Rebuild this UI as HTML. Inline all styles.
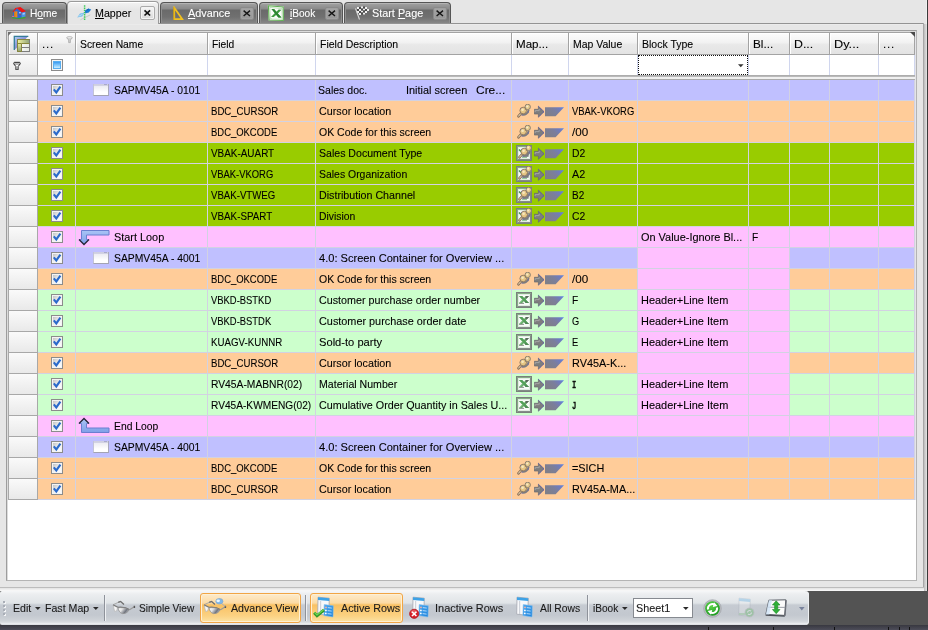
<!DOCTYPE html>
<html><head><meta charset="utf-8"><title>Mapper</title>
<style>
*{box-sizing:border-box;margin:0;padding:0}
html,body{width:928px;height:630px;overflow:hidden}
body{background:#e6e6e6;font-family:"Liberation Sans",sans-serif;font-size:11.5px;color:#000;position:relative}
.abs{position:absolute}
.t{display:inline-block;transform-origin:0 50%;white-space:nowrap;-webkit-text-stroke:0.1px currentColor}
.c{position:absolute;overflow:hidden;white-space:nowrap;line-height:20px;padding-left:2.5px;font-size:11.5px}
.hd{background:linear-gradient(#fcfcfc,#f2f2f2 45%,#e9e9e9 55%,#e3e3e3)!important;line-height:23px;padding-left:4px;box-shadow:inset 1px 1px 0 #fff}
.ind{background:linear-gradient(#fafafa,#e9e9e9)!important}
.cb{position:absolute;width:12px;height:12px;border:1px solid #8c8c8c;background:linear-gradient(135deg,#b9b9b9,#f2f2f2 55%,#fff);box-shadow:inset 0 0 0 1px #f4f4f4}
.tab{position:absolute;top:2px;height:21px;border:1px solid #565656;border-bottom:none;border-radius:4px 4px 0 0;background:linear-gradient(#a2a2a2 0,#8a8a8a 6px,#6a6a6a 7px,#707070 14px,#8a8a8a 21px);box-shadow:inset 0 1px 0 #b4b4b4,inset 1px 0 0 #8e8e8e,inset -1px 0 0 #8e8e8e;color:#fff;line-height:20px;white-space:nowrap}
.tab.act{background:linear-gradient(#f2f2f2,#e6e6e6 8px);color:#000;border-color:#9b9b9b;top:1px;height:23px;box-shadow:inset 0 1px 0 #fff}
.x{position:absolute;width:14px;height:13px;border:1px solid #8a8a8a;border-radius:2px;background:linear-gradient(#a6a6a6,#969696);box-shadow:inset 0 0 0 1px #a0a0a0}
.tab.act .x{width:15px;height:14px;border-color:#ababab;background:linear-gradient(#f6f6f6,#dadada);box-shadow:inset 0 0 0 1px #f4f4f4}
.tb{position:absolute;line-height:16px;white-space:nowrap;color:#1a1a1a}
#root{position:absolute;left:0;top:0;width:928px;height:630px;will-change:transform;overflow:hidden}
</style></head><body><div id="root">

<svg width="0" height="0" style="position:absolute"><defs><linearGradient id="pg" x1="0" y1="0.500" x2="1" y2="0"><stop offset="0" stop-color="#7f7f8a"/><stop offset="0.450" stop-color="#7b7e9c"/><stop offset="0.750" stop-color="#6f7cc0"/><stop offset="1" stop-color="#5c86e8"/></linearGradient></defs></svg>
<div class="abs" style="left:0;top:23px;width:924px;height:1px;background:#939393"></div>
<div class="abs" style="left:0;top:24px;width:923px;height:1px;background:#ebebeb"></div>
<div class="abs" style="left:926px;top:0;width:1px;height:591px;background:#f0f0f0"></div>
<div class="abs" style="left:923px;top:23px;width:1px;height:566px;background:#a8a8a8"></div>
<div class="abs" style="left:924px;top:24px;width:3px;height:567px;background:linear-gradient(90deg,#bcbcbc,#e6e6e6)"></div>
<div class="abs" style="left:927px;top:0;width:1px;height:630px;background:#3a3a3a"></div>
<div class="tab" style="left:2px;width:65px"><svg class="abs" style="left:8px;top:3px" width="16" height="14" viewBox="11 6 16 14"><ellipse cx="18.800" cy="17.400" rx="6.900" ry="1.700" fill="#37a82c"/><path d="M13 12.200L17 8.300L21.600 12.300V17.600L17.500 18.300L13.200 17z" fill="#2b68d4"/><path d="M21.600 12.300L25.500 11.500V16.600L21.600 17.600z" fill="#4b8fe6"/><path d="M22.600 13.200l2.200-.4v1.500l-2.200.4z" fill="#a9d2f6"/><path d="M14 11.600L17.400 11.300V17.600L14.200 16.900z" fill="#e98a1e"/><path d="M14.800 12.200v4.600" stroke="#c86a10" stroke-width=".6"/><path d="M19.300 12h1.300v1.500h-1.300z" fill="#d8ecff"/><path d="M19.300 13.700h1.500v1h-1.500z" fill="#d03030"/><path d="M15.300 8L20.400 7L26.100 11.300L22 12.500L17 8.300L13.200 12.300L12.600 11.800z" fill="#f01414"/><ellipse cx="13" cy="16.400" rx="1" ry=".7" fill="#d858c8"/></svg><span class="abs" style="left:27px;top:0px"><span class="t" style="transform:scaleX(0.887)">H<u>o</u>me</span></span></div>
<div class="tab act" style="left:67px;width:92px"><svg class="abs" style="left:8px;top:2px" width="17" height="18" viewBox="76 4 17 18"><path d="M80.400 19.800L90.200 14.900" stroke="#c9c9c9" stroke-width="1"/><path d="M77.200 17.400L80 13.600L84.600 12.500L82.200 16.600z" fill="#7cc0ec"/><path d="M78.600 16.300L82.600 14.200" stroke="#b9e0f8" stroke-width="1"/><path d="M84.800 10.600L88.400 8.400L91.200 9.400L88.800 12.400L84.800 13.400z" fill="#1c7ad2"/><path d="M86.500 10.200l2.300-1" stroke="#0f5fb0" stroke-width="1"/><path d="M84.600 5.300V20.600" stroke="#3ecb5a" stroke-width="1.500" stroke-dasharray="1.400 .800"/></svg><span class="abs" style="left:27px;top:1px"><span class="t" style="transform:scaleX(0.928)"><u>M</u>apper</span></span><div class="x" style="left:72px;top:4px"><svg width="13" height="12" viewBox="0 0 13 12" class="abs" style="left:0;top:0"><path d="M3.500 3.300l5.600 5.200M9.100 3.300l-5.600 5.200" stroke="#111" stroke-width="1.700"/></svg></div></div>
<div class="tab" style="left:160px;width:98px"><svg class="abs" style="left:12px;top:3px" width="12" height="15" viewBox="0 0 12 15"><path d="M1.300 1.800L9.300 13.200H1.300z" fill="none" stroke="#f2c11e" stroke-width="1.700" stroke-linejoin="miter"/><path d="M.8 1.200v12.600" stroke="#c89a10" stroke-width=".7"/></svg><span class="abs" style="left:27px;top:0px"><span class="t" style="transform:scaleX(0.943)"><u>A</u>dvance</span></span><div class="x" style="left:79px;top:4px"><svg width="12" height="11" viewBox="0 0 12 11" class="abs" style="left:0;top:0"><path d="M2.600 2.600l6.400 5.400M9 2.600l-6.400 5.400" stroke="#161616" stroke-width="1.400"/></svg></div></div>
<div class="tab" style="left:259px;width:84px"><svg class="abs" style="left:7px;top:1px" width="18" height="18" viewBox="267 4 18 18"><path d="M267.800 5L283.800 6.400L284 21L268.600 20.600z" fill="#f4faf2"/><path d="M268.400 5.700L283.200 7L283.400 20.400L269.100 20z" fill="none" stroke="#5fae52" stroke-width="1.100"/><path d="M269.800 7.400L282 8.600L282.200 19L270.400 18.600z" fill="#fbfdfb" stroke="#9fd095" stroke-width=".6"/><path d="M271.500 9l2.800.2 2 2.600 2.400-2.300 2.800.3-3.700 3.700 3.900 4.100-3-.2-2.300-2.700-2.600 2.400-2.800-.2 3.900-3.800z" fill="#3d9a3d"/><path d="M271.500 9l2.800.2 6.900 8.400-3-.2z" fill="#2a8430"/><path d="M272 18.300l9.500.6" stroke="#e8f4e6" stroke-width="1.400"/></svg><span class="abs" style="left:30px;top:0px"><span class="t" style="transform:scaleX(0.876)"><u>i</u>Book</span></span><div class="x" style="left:65px;top:4px"><svg width="12" height="11" viewBox="0 0 12 11" class="abs" style="left:0;top:0"><path d="M2.600 2.600l6.400 5.400M9 2.600l-6.400 5.400" stroke="#161616" stroke-width="1.400"/></svg></div></div>
<div class="tab" style="left:344px;width:107px"><svg class="abs" style="left:8px;top:3px" width="18" height="15" viewBox="0 0 18 15"><g fill="#f0f0f0"><rect x="4" y="1" width="2" height="2"/><rect x="8" y="0.500" width="2" height="2"/><rect x="12" y="1" width="2" height="2"/><rect x="6" y="3" width="2" height="2"/><rect x="10" y="2.500" width="2" height="2"/><rect x="14" y="3" width="2" height="2"/><rect x="4" y="5" width="2" height="2"/><rect x="8" y="4.500" width="2" height="2"/><rect x="12" y="5" width="2" height="2"/><rect x="6" y="7" width="2" height="2"/><rect x="10" y="6.500" width="2" height="2"/></g><g fill="#4a4a4a"><rect x="6" y="1" width="2" height="2"/><rect x="10" y="0.500" width="2" height="2"/><rect x="4" y="3" width="2" height="2"/><rect x="8" y="2.500" width="2" height="2"/><rect x="12" y="3" width="2" height="2"/><rect x="6" y="5" width="2" height="2"/><rect x="10" y="4.500" width="2" height="2"/><rect x="8" y="6.500" width="2" height="2"/></g><path d="M2.500 2.500l4 11" stroke="#d8d8d8" stroke-width="1.100"/></svg><span class="abs" style="left:27px;top:0px"><span class="t" style="transform:scaleX(0.942)">Start <u>P</u>age</span></span><div class="x" style="left:88px;top:4px"><svg width="12" height="11" viewBox="0 0 12 11" class="abs" style="left:0;top:0"><path d="M2.600 2.600l6.400 5.400M9 2.600l-6.400 5.400" stroke="#161616" stroke-width="1.400"/></svg></div></div>
<div class="abs" style="left:6px;top:30px;width:911px;height:551px;border:1px solid #9d9d9d;border-right-color:#b4b4b4;border-bottom-color:#b4b4b4;background:#fff"></div>
<div class="abs" style="left:7px;top:31px;width:909px;height:549px;border:1px solid #dcdcdc;border-right:none;border-bottom:none"></div>
<div class="abs" style="left:8px;top:32px;width:907px;height:23px;background:#a3a3a3"></div>
<div class="abs" style="left:8px;top:55px;width:907px;height:21px;background:#d0d6ee"></div>
<div class="abs" style="left:8px;top:55px;width:30px;height:21px;background:#a8a8a8"></div>
<div class="abs" style="left:8px;top:75px;width:907px;height:5px;background:linear-gradient(#adadad 0 1px,#b9b9b9 1px 2px,#f0f0f0 2px 4px,#ababab 4px 5px)"></div>
<div class="abs" style="left:8px;top:80px;width:907px;height:420px;background:#d2d2e2"></div>
<div class="abs" style="left:8px;top:80px;width:30px;height:420px;background:#a8a8a8"></div>
<div class="c hd" style="left:9px;top:33px;width:28px;height:21px;background:#eee"></div>
<div class="c hd" style="left:38px;top:33px;width:37px;height:21px;background:#eee"><span class="t" style="letter-spacing:0.8px">...</span></div>
<div class="c hd" style="left:76px;top:33px;width:131px;height:21px;background:#eee"><span class="t" style="transform:scaleX(0.899)">Screen Name</span></div>
<div class="c hd" style="left:208px;top:33px;width:107px;height:21px;background:#eee"><span class="t" style="transform:scaleX(0.891)">Field</span></div>
<div class="c hd" style="left:316px;top:33px;width:195px;height:21px;background:#eee"><span class="t" style="transform:scaleX(0.913)">Field Description</span></div>
<div class="c hd" style="left:512px;top:33px;width:56px;height:21px;background:#eee"><span class="t" style="transform:scaleX(1.008)">Map...</span></div>
<div class="c hd" style="left:569px;top:33px;width:68px;height:21px;background:#eee"><span class="t" style="transform:scaleX(0.909)">Map Value</span></div>
<div class="c hd" style="left:638px;top:33px;width:110px;height:21px;background:#eee"><span class="t" style="transform:scaleX(0.914)">Block Type</span></div>
<div class="c hd" style="left:749px;top:33px;width:40px;height:21px;background:#eee"><span class="t" style="transform:scaleX(1.020)">Bl...</span></div>
<div class="c hd" style="left:790px;top:33px;width:39px;height:21px;background:#eee"><span class="t" style="transform:scaleX(1.073)">D...</span></div>
<div class="c hd" style="left:830px;top:33px;width:48px;height:21px;background:#eee"><span class="t" style="transform:scaleX(1.106)">Dy...</span></div>
<div class="c hd" style="left:879px;top:33px;width:35px;height:21px;background:#eee"><span class="t" style="letter-spacing:0.8px">...</span></div>
<div class="c ind" style="left:9px;top:55px;width:28px;height:20px;background:#fff"></div>
<div class="c " style="left:38px;top:55px;width:37px;height:20px;background:#fff"></div>
<div class="c " style="left:76px;top:55px;width:131px;height:20px;background:#fff"></div>
<div class="c " style="left:208px;top:55px;width:107px;height:20px;background:#fff"></div>
<div class="c " style="left:316px;top:55px;width:195px;height:20px;background:#fff"></div>
<div class="c " style="left:512px;top:55px;width:56px;height:20px;background:#fff"></div>
<div class="c " style="left:569px;top:55px;width:68px;height:20px;background:#fff"></div>
<div class="c " style="left:638px;top:55px;width:110px;height:20px;background:#fff"></div>
<div class="c " style="left:749px;top:55px;width:40px;height:20px;background:#fff"></div>
<div class="c " style="left:790px;top:55px;width:39px;height:20px;background:#fff"></div>
<div class="c " style="left:830px;top:55px;width:48px;height:20px;background:#fff"></div>
<div class="c " style="left:879px;top:55px;width:35px;height:20px;background:#fff"></div>
<div class="c ind" style="left:9px;top:80px;width:28px;height:20px;background:#eee"></div>
<div class="c " style="left:38px;top:80px;width:37px;height:20px;background:#c0c0ff"><div class="cb" style="left:13px;top:4px"><svg width="10" height="10" viewBox="0 0 10 10" style="position:absolute;left:0;top:0"><path d="M1.800 4.300L4.300 7.400L8.400 1.600" fill="none" stroke="#2b6acb" stroke-width="2.100"/></svg></div></div>
<div class="c " style="left:76px;top:80px;width:131px;height:20px;background:#c0c0ff"><span class="abs" style="left:17px;top:4px;width:16px;height:12px;background:linear-gradient(#cdcde0 0,#d2d2e3 1.500px,#ececf2 2px,#f5f5f8 5px,#fff 8px);border:1px solid #c3c3d6;border-top:none;border-bottom-color:#a3a3b3;border-right-color:#a9a9bb"><span class="abs" style="left:10px;top:0;width:3px;height:1px;background:#a9a9cc"></span></span><span class="abs" style="left:38px;top:0"><span class="t" style="transform:scaleX(0.899)">SAPMV45A - 0101</span></span></div>
<div class="c " style="left:208px;top:80px;width:107px;height:20px;background:#c0c0ff"></div>
<div class="c " style="left:316px;top:80px;width:195px;height:20px;background:#c0c0ff"><span class="abs" style="left:2px"><span class="t" style="transform:scaleX(0.916)">Sales doc.</span></span><span class="abs" style="left:90px"><span class="t" style="transform:scaleX(0.948)">Initial screen</span></span><span class="abs" style="left:160px"><span class="t" style="transform:scaleX(1.039)">Cre...</span></span></div>
<div class="c " style="left:512px;top:80px;width:56px;height:20px;background:#c0c0ff"></div>
<div class="c " style="left:569px;top:80px;width:68px;height:20px;background:#c0c0ff"></div>
<div class="c " style="left:638px;top:80px;width:110px;height:20px;background:#c0c0ff"></div>
<div class="c " style="left:749px;top:80px;width:40px;height:20px;background:#c0c0ff"></div>
<div class="c " style="left:790px;top:80px;width:39px;height:20px;background:#c0c0ff"></div>
<div class="c " style="left:830px;top:80px;width:48px;height:20px;background:#c0c0ff"></div>
<div class="c " style="left:879px;top:80px;width:35px;height:20px;background:#c0c0ff"></div>
<div class="c ind" style="left:9px;top:101px;width:28px;height:20px;background:#eee"></div>
<div class="c " style="left:38px;top:101px;width:37px;height:20px;background:#ffcc99"><div class="cb" style="left:13px;top:4px"><svg width="10" height="10" viewBox="0 0 10 10" style="position:absolute;left:0;top:0"><path d="M1.800 4.300L4.300 7.400L8.400 1.600" fill="none" stroke="#2b6acb" stroke-width="2.100"/></svg></div></div>
<div class="c " style="left:76px;top:101px;width:131px;height:20px;background:#ffcc99"></div>
<div class="c " style="left:208px;top:101px;width:107px;height:20px;background:#ffcc99"><span class="t" style="transform:scaleX(0.835)">BDC_CURSOR</span></div>
<div class="c " style="left:316px;top:101px;width:195px;height:20px;background:#ffcc99"><span class="t" style="transform:scaleX(0.934)">Cursor location</span></div>
<div class="c " style="left:512px;top:101px;width:56px;height:20px;background:#ffcc99"><svg class="abs" style="left:5px;top:3px" width="15" height="14" viewBox="0 0 15 14"><path d="M1.400 12.300L3.800 9.600" stroke="#8a6e56" stroke-width="2.600" stroke-linecap="round"/><path d="M1.500 12.200L3.600 9.800" stroke="#f6e8c4" stroke-width="1" stroke-linecap="round"/><path d="M4.600 10.200C7.500 11.800 11.200 9.200 11.600 5.800" fill="none" stroke="#7b7b80" stroke-width="2"/><circle cx="6.200" cy="6.500" r="3.300" fill="#e6c684" stroke="#8b7660" stroke-width=".9"/><circle cx="10.700" cy="2.900" r="2.700" fill="#e9cc8c" stroke="#80786c" stroke-width=".9"/><path d="M8.200 4.600l1 1.600" stroke="#8b7660" stroke-width=".8"/><circle cx="5.600" cy="5.800" r="1.300" fill="#f6e8c0"/><circle cx="10.200" cy="2.400" r="1" fill="#f7ebca"/><g opacity=".55"><rect x="11" y="7.400" width="1" height="1.200" fill="#5a5ad0"/><rect x="4.600" y="11" width="1" height="1" fill="#5a5ad0"/><rect x="3.200" y="3.900" width="1" height="1" fill="#6a6ac8"/></g></svg><svg class="abs" style="left:22px;top:4px" width="32" height="13" viewBox="0 0 32 13"><path d="M0.300 4.300H4.400V1.300L10 6.700L4.400 12.100V9H0.300z" fill="#7e7e7e" stroke="#67676f" stroke-width=".7"/><path d="M1.200 7V5.600H5.200V4" fill="none" stroke="#a4a4a4" stroke-width="1"/><path d="M4.400 1.300L10 6.700L4.400 12.100" fill="none" stroke="#5555c8" stroke-width=".8" stroke-dasharray="1.200 .800"/><path d="M11 2.200H30L21.600 11.200H11z" fill="url(#pg)"/></svg></div>
<div class="c " style="left:569px;top:101px;width:68px;height:20px;background:#ffcc99"><span class="t" style="transform:scaleX(0.818)">VBAK-VKORG</span></div>
<div class="c " style="left:638px;top:101px;width:110px;height:20px;background:#ffcc99"></div>
<div class="c " style="left:749px;top:101px;width:40px;height:20px;background:#ffcc99"></div>
<div class="c " style="left:790px;top:101px;width:39px;height:20px;background:#ffcc99"></div>
<div class="c " style="left:830px;top:101px;width:48px;height:20px;background:#ffcc99"></div>
<div class="c " style="left:879px;top:101px;width:35px;height:20px;background:#ffcc99"></div>
<div class="c ind" style="left:9px;top:122px;width:28px;height:20px;background:#eee"></div>
<div class="c " style="left:38px;top:122px;width:37px;height:20px;background:#ffcc99"><div class="cb" style="left:13px;top:4px"><svg width="10" height="10" viewBox="0 0 10 10" style="position:absolute;left:0;top:0"><path d="M1.800 4.300L4.300 7.400L8.400 1.600" fill="none" stroke="#2b6acb" stroke-width="2.100"/></svg></div></div>
<div class="c " style="left:76px;top:122px;width:131px;height:20px;background:#ffcc99"></div>
<div class="c " style="left:208px;top:122px;width:107px;height:20px;background:#ffcc99"><span class="t" style="transform:scaleX(0.822)">BDC_OKCODE</span></div>
<div class="c " style="left:316px;top:122px;width:195px;height:20px;background:#ffcc99"><span class="t" style="transform:scaleX(0.914)">OK Code for this screen</span></div>
<div class="c " style="left:512px;top:122px;width:56px;height:20px;background:#ffcc99"><svg class="abs" style="left:5px;top:3px" width="15" height="14" viewBox="0 0 15 14"><path d="M1.400 12.300L3.800 9.600" stroke="#8a6e56" stroke-width="2.600" stroke-linecap="round"/><path d="M1.500 12.200L3.600 9.800" stroke="#f6e8c4" stroke-width="1" stroke-linecap="round"/><path d="M4.600 10.200C7.500 11.800 11.200 9.200 11.600 5.800" fill="none" stroke="#7b7b80" stroke-width="2"/><circle cx="6.200" cy="6.500" r="3.300" fill="#e6c684" stroke="#8b7660" stroke-width=".9"/><circle cx="10.700" cy="2.900" r="2.700" fill="#e9cc8c" stroke="#80786c" stroke-width=".9"/><path d="M8.200 4.600l1 1.600" stroke="#8b7660" stroke-width=".8"/><circle cx="5.600" cy="5.800" r="1.300" fill="#f6e8c0"/><circle cx="10.200" cy="2.400" r="1" fill="#f7ebca"/><g opacity=".55"><rect x="11" y="7.400" width="1" height="1.200" fill="#5a5ad0"/><rect x="4.600" y="11" width="1" height="1" fill="#5a5ad0"/><rect x="3.200" y="3.900" width="1" height="1" fill="#6a6ac8"/></g></svg><svg class="abs" style="left:22px;top:4px" width="32" height="13" viewBox="0 0 32 13"><path d="M0.300 4.300H4.400V1.300L10 6.700L4.400 12.100V9H0.300z" fill="#7e7e7e" stroke="#67676f" stroke-width=".7"/><path d="M1.200 7V5.600H5.200V4" fill="none" stroke="#a4a4a4" stroke-width="1"/><path d="M4.400 1.300L10 6.700L4.400 12.100" fill="none" stroke="#5555c8" stroke-width=".8" stroke-dasharray="1.200 .800"/><path d="M11 2.200H30L21.600 11.200H11z" fill="url(#pg)"/></svg></div>
<div class="c " style="left:569px;top:122px;width:68px;height:20px;background:#ffcc99"><span class="t" style="transform:scaleX(1.013)">/00</span></div>
<div class="c " style="left:638px;top:122px;width:110px;height:20px;background:#ffcc99"></div>
<div class="c " style="left:749px;top:122px;width:40px;height:20px;background:#ffcc99"></div>
<div class="c " style="left:790px;top:122px;width:39px;height:20px;background:#ffcc99"></div>
<div class="c " style="left:830px;top:122px;width:48px;height:20px;background:#ffcc99"></div>
<div class="c " style="left:879px;top:122px;width:35px;height:20px;background:#ffcc99"></div>
<div class="c ind" style="left:9px;top:143px;width:28px;height:20px;background:#eee"></div>
<div class="c " style="left:38px;top:143px;width:37px;height:20px;background:#99cc00"><div class="cb" style="left:13px;top:4px"><svg width="10" height="10" viewBox="0 0 10 10" style="position:absolute;left:0;top:0"><path d="M1.800 4.300L4.300 7.400L8.400 1.600" fill="none" stroke="#2b6acb" stroke-width="2.100"/></svg></div></div>
<div class="c " style="left:76px;top:143px;width:131px;height:20px;background:#99cc00"></div>
<div class="c " style="left:208px;top:143px;width:107px;height:20px;background:#99cc00"><span class="t" style="transform:scaleX(0.862)">VBAK-AUART</span></div>
<div class="c " style="left:316px;top:143px;width:195px;height:20px;background:#99cc00"><span class="t" style="transform:scaleX(0.919)">Sales Document Type</span></div>
<div class="c " style="left:512px;top:143px;width:56px;height:20px;background:#99cc00"><span class="abs" style="left:4px;top:2px;width:16px;height:16px;border:1px solid #7a807d;background:#f8fbf8;box-shadow:inset 1px 1px 0 0 #86ac86,inset 0 0 0 1px #848c88,inset 0 0 0 2px #e2ece2"></span><svg class="abs" style="left:6px;top:4px" width="12" height="12" viewBox="0 0 12 12"><path d="M1 2.500l3 3" stroke="#3f8f4a" stroke-width="1.600" fill="none"/><path d="M4 10.300h5" stroke="#7fbf86" stroke-width="1" fill="none"/><path d="M4.500 9h5.300V4.500" stroke="#6d7672" stroke-width="1.600" fill="none"/></svg><svg class="abs" style="left:6px;top:2px" width="15" height="14" viewBox="0 0 15 14"><path d="M1.400 12.300L3.800 9.600" stroke="#8a6e56" stroke-width="2.600" stroke-linecap="round"/><path d="M1.500 12.200L3.600 9.800" stroke="#f6e8c4" stroke-width="1" stroke-linecap="round"/><path d="M4.600 10.200C7.500 11.800 11.200 9.200 11.600 5.800" fill="none" stroke="#7b7b80" stroke-width="2"/><circle cx="6.200" cy="6.500" r="3.300" fill="#e6c684" stroke="#8b7660" stroke-width=".9"/><circle cx="10.700" cy="2.900" r="2.700" fill="#e9cc8c" stroke="#80786c" stroke-width=".9"/><path d="M8.200 4.600l1 1.600" stroke="#8b7660" stroke-width=".8"/><circle cx="5.600" cy="5.800" r="1.300" fill="#f6e8c0"/><circle cx="10.200" cy="2.400" r="1" fill="#f7ebca"/><g opacity=".55"><rect x="11" y="7.400" width="1" height="1.200" fill="#5a5ad0"/><rect x="4.600" y="11" width="1" height="1" fill="#5a5ad0"/><rect x="3.200" y="3.900" width="1" height="1" fill="#6a6ac8"/></g></svg><svg class="abs" style="left:22px;top:4px" width="32" height="13" viewBox="0 0 32 13"><path d="M0.300 4.300H4.400V1.300L10 6.700L4.400 12.100V9H0.300z" fill="#7e7e7e" stroke="#67676f" stroke-width=".7"/><path d="M1.200 7V5.600H5.200V4" fill="none" stroke="#a4a4a4" stroke-width="1"/><path d="M4.400 1.300L10 6.700L4.400 12.100" fill="none" stroke="#5555c8" stroke-width=".8" stroke-dasharray="1.200 .800"/><path d="M11 2.200H30L21.600 11.200H11z" fill="url(#pg)"/></svg></div>
<div class="c " style="left:569px;top:143px;width:68px;height:20px;background:#99cc00"><span class="t" style="transform:scaleX(0.898)">D2</span></div>
<div class="c " style="left:638px;top:143px;width:110px;height:20px;background:#99cc00"></div>
<div class="c " style="left:749px;top:143px;width:40px;height:20px;background:#99cc00"></div>
<div class="c " style="left:790px;top:143px;width:39px;height:20px;background:#99cc00"></div>
<div class="c " style="left:830px;top:143px;width:48px;height:20px;background:#99cc00"></div>
<div class="c " style="left:879px;top:143px;width:35px;height:20px;background:#99cc00"></div>
<div class="c ind" style="left:9px;top:164px;width:28px;height:20px;background:#eee"></div>
<div class="c " style="left:38px;top:164px;width:37px;height:20px;background:#99cc00"><div class="cb" style="left:13px;top:4px"><svg width="10" height="10" viewBox="0 0 10 10" style="position:absolute;left:0;top:0"><path d="M1.800 4.300L4.300 7.400L8.400 1.600" fill="none" stroke="#2b6acb" stroke-width="2.100"/></svg></div></div>
<div class="c " style="left:76px;top:164px;width:131px;height:20px;background:#99cc00"></div>
<div class="c " style="left:208px;top:164px;width:107px;height:20px;background:#99cc00"><span class="t" style="transform:scaleX(0.818)">VBAK-VKORG</span></div>
<div class="c " style="left:316px;top:164px;width:195px;height:20px;background:#99cc00"><span class="t" style="transform:scaleX(0.908)">Sales Organization</span></div>
<div class="c " style="left:512px;top:164px;width:56px;height:20px;background:#99cc00"><span class="abs" style="left:4px;top:2px;width:16px;height:16px;border:1px solid #7a807d;background:#f8fbf8;box-shadow:inset 1px 1px 0 0 #86ac86,inset 0 0 0 1px #848c88,inset 0 0 0 2px #e2ece2"></span><svg class="abs" style="left:6px;top:4px" width="12" height="12" viewBox="0 0 12 12"><path d="M1 2.500l3 3" stroke="#3f8f4a" stroke-width="1.600" fill="none"/><path d="M4 10.300h5" stroke="#7fbf86" stroke-width="1" fill="none"/><path d="M4.500 9h5.300V4.500" stroke="#6d7672" stroke-width="1.600" fill="none"/></svg><svg class="abs" style="left:6px;top:2px" width="15" height="14" viewBox="0 0 15 14"><path d="M1.400 12.300L3.800 9.600" stroke="#8a6e56" stroke-width="2.600" stroke-linecap="round"/><path d="M1.500 12.200L3.600 9.800" stroke="#f6e8c4" stroke-width="1" stroke-linecap="round"/><path d="M4.600 10.200C7.500 11.800 11.200 9.200 11.600 5.800" fill="none" stroke="#7b7b80" stroke-width="2"/><circle cx="6.200" cy="6.500" r="3.300" fill="#e6c684" stroke="#8b7660" stroke-width=".9"/><circle cx="10.700" cy="2.900" r="2.700" fill="#e9cc8c" stroke="#80786c" stroke-width=".9"/><path d="M8.200 4.600l1 1.600" stroke="#8b7660" stroke-width=".8"/><circle cx="5.600" cy="5.800" r="1.300" fill="#f6e8c0"/><circle cx="10.200" cy="2.400" r="1" fill="#f7ebca"/><g opacity=".55"><rect x="11" y="7.400" width="1" height="1.200" fill="#5a5ad0"/><rect x="4.600" y="11" width="1" height="1" fill="#5a5ad0"/><rect x="3.200" y="3.900" width="1" height="1" fill="#6a6ac8"/></g></svg><svg class="abs" style="left:22px;top:4px" width="32" height="13" viewBox="0 0 32 13"><path d="M0.300 4.300H4.400V1.300L10 6.700L4.400 12.100V9H0.300z" fill="#7e7e7e" stroke="#67676f" stroke-width=".7"/><path d="M1.200 7V5.600H5.200V4" fill="none" stroke="#a4a4a4" stroke-width="1"/><path d="M4.400 1.300L10 6.700L4.400 12.100" fill="none" stroke="#5555c8" stroke-width=".8" stroke-dasharray="1.200 .800"/><path d="M11 2.200H30L21.600 11.200H11z" fill="url(#pg)"/></svg></div>
<div class="c " style="left:569px;top:164px;width:68px;height:20px;background:#99cc00"><span class="t" style="transform:scaleX(0.938)">A2</span></div>
<div class="c " style="left:638px;top:164px;width:110px;height:20px;background:#99cc00"></div>
<div class="c " style="left:749px;top:164px;width:40px;height:20px;background:#99cc00"></div>
<div class="c " style="left:790px;top:164px;width:39px;height:20px;background:#99cc00"></div>
<div class="c " style="left:830px;top:164px;width:48px;height:20px;background:#99cc00"></div>
<div class="c " style="left:879px;top:164px;width:35px;height:20px;background:#99cc00"></div>
<div class="c ind" style="left:9px;top:185px;width:28px;height:20px;background:#eee"></div>
<div class="c " style="left:38px;top:185px;width:37px;height:20px;background:#99cc00"><div class="cb" style="left:13px;top:4px"><svg width="10" height="10" viewBox="0 0 10 10" style="position:absolute;left:0;top:0"><path d="M1.800 4.300L4.300 7.400L8.400 1.600" fill="none" stroke="#2b6acb" stroke-width="2.100"/></svg></div></div>
<div class="c " style="left:76px;top:185px;width:131px;height:20px;background:#99cc00"></div>
<div class="c " style="left:208px;top:185px;width:107px;height:20px;background:#99cc00"><span class="t" style="transform:scaleX(0.837)">VBAK-VTWEG</span></div>
<div class="c " style="left:316px;top:185px;width:195px;height:20px;background:#99cc00"><span class="t" style="transform:scaleX(0.929)">Distribution Channel</span></div>
<div class="c " style="left:512px;top:185px;width:56px;height:20px;background:#99cc00"><span class="abs" style="left:4px;top:2px;width:16px;height:16px;border:1px solid #7a807d;background:#f8fbf8;box-shadow:inset 1px 1px 0 0 #86ac86,inset 0 0 0 1px #848c88,inset 0 0 0 2px #e2ece2"></span><svg class="abs" style="left:6px;top:4px" width="12" height="12" viewBox="0 0 12 12"><path d="M1 2.500l3 3" stroke="#3f8f4a" stroke-width="1.600" fill="none"/><path d="M4 10.300h5" stroke="#7fbf86" stroke-width="1" fill="none"/><path d="M4.500 9h5.300V4.500" stroke="#6d7672" stroke-width="1.600" fill="none"/></svg><svg class="abs" style="left:6px;top:2px" width="15" height="14" viewBox="0 0 15 14"><path d="M1.400 12.300L3.800 9.600" stroke="#8a6e56" stroke-width="2.600" stroke-linecap="round"/><path d="M1.500 12.200L3.600 9.800" stroke="#f6e8c4" stroke-width="1" stroke-linecap="round"/><path d="M4.600 10.200C7.500 11.800 11.200 9.200 11.600 5.800" fill="none" stroke="#7b7b80" stroke-width="2"/><circle cx="6.200" cy="6.500" r="3.300" fill="#e6c684" stroke="#8b7660" stroke-width=".9"/><circle cx="10.700" cy="2.900" r="2.700" fill="#e9cc8c" stroke="#80786c" stroke-width=".9"/><path d="M8.200 4.600l1 1.600" stroke="#8b7660" stroke-width=".8"/><circle cx="5.600" cy="5.800" r="1.300" fill="#f6e8c0"/><circle cx="10.200" cy="2.400" r="1" fill="#f7ebca"/><g opacity=".55"><rect x="11" y="7.400" width="1" height="1.200" fill="#5a5ad0"/><rect x="4.600" y="11" width="1" height="1" fill="#5a5ad0"/><rect x="3.200" y="3.900" width="1" height="1" fill="#6a6ac8"/></g></svg><svg class="abs" style="left:22px;top:4px" width="32" height="13" viewBox="0 0 32 13"><path d="M0.300 4.300H4.400V1.300L10 6.700L4.400 12.100V9H0.300z" fill="#7e7e7e" stroke="#67676f" stroke-width=".7"/><path d="M1.200 7V5.600H5.200V4" fill="none" stroke="#a4a4a4" stroke-width="1"/><path d="M4.400 1.300L10 6.700L4.400 12.100" fill="none" stroke="#5555c8" stroke-width=".8" stroke-dasharray="1.200 .800"/><path d="M11 2.200H30L21.600 11.200H11z" fill="url(#pg)"/></svg></div>
<div class="c " style="left:569px;top:185px;width:68px;height:20px;background:#99cc00"><span class="t" style="transform:scaleX(0.867)">B2</span></div>
<div class="c " style="left:638px;top:185px;width:110px;height:20px;background:#99cc00"></div>
<div class="c " style="left:749px;top:185px;width:40px;height:20px;background:#99cc00"></div>
<div class="c " style="left:790px;top:185px;width:39px;height:20px;background:#99cc00"></div>
<div class="c " style="left:830px;top:185px;width:48px;height:20px;background:#99cc00"></div>
<div class="c " style="left:879px;top:185px;width:35px;height:20px;background:#99cc00"></div>
<div class="c ind" style="left:9px;top:206px;width:28px;height:20px;background:#eee"></div>
<div class="c " style="left:38px;top:206px;width:37px;height:20px;background:#99cc00"><div class="cb" style="left:13px;top:4px"><svg width="10" height="10" viewBox="0 0 10 10" style="position:absolute;left:0;top:0"><path d="M1.800 4.300L4.300 7.400L8.400 1.600" fill="none" stroke="#2b6acb" stroke-width="2.100"/></svg></div></div>
<div class="c " style="left:76px;top:206px;width:131px;height:20px;background:#99cc00"></div>
<div class="c " style="left:208px;top:206px;width:107px;height:20px;background:#99cc00"><span class="t" style="transform:scaleX(0.852)">VBAK-SPART</span></div>
<div class="c " style="left:316px;top:206px;width:195px;height:20px;background:#99cc00"><span class="t" style="transform:scaleX(0.899)">Division</span></div>
<div class="c " style="left:512px;top:206px;width:56px;height:20px;background:#99cc00"><span class="abs" style="left:4px;top:2px;width:16px;height:16px;border:1px solid #7a807d;background:#f8fbf8;box-shadow:inset 1px 1px 0 0 #86ac86,inset 0 0 0 1px #848c88,inset 0 0 0 2px #e2ece2"></span><svg class="abs" style="left:6px;top:4px" width="12" height="12" viewBox="0 0 12 12"><path d="M1 2.500l3 3" stroke="#3f8f4a" stroke-width="1.600" fill="none"/><path d="M4 10.300h5" stroke="#7fbf86" stroke-width="1" fill="none"/><path d="M4.500 9h5.300V4.500" stroke="#6d7672" stroke-width="1.600" fill="none"/></svg><svg class="abs" style="left:6px;top:2px" width="15" height="14" viewBox="0 0 15 14"><path d="M1.400 12.300L3.800 9.600" stroke="#8a6e56" stroke-width="2.600" stroke-linecap="round"/><path d="M1.500 12.200L3.600 9.800" stroke="#f6e8c4" stroke-width="1" stroke-linecap="round"/><path d="M4.600 10.200C7.500 11.800 11.200 9.200 11.600 5.800" fill="none" stroke="#7b7b80" stroke-width="2"/><circle cx="6.200" cy="6.500" r="3.300" fill="#e6c684" stroke="#8b7660" stroke-width=".9"/><circle cx="10.700" cy="2.900" r="2.700" fill="#e9cc8c" stroke="#80786c" stroke-width=".9"/><path d="M8.200 4.600l1 1.600" stroke="#8b7660" stroke-width=".8"/><circle cx="5.600" cy="5.800" r="1.300" fill="#f6e8c0"/><circle cx="10.200" cy="2.400" r="1" fill="#f7ebca"/><g opacity=".55"><rect x="11" y="7.400" width="1" height="1.200" fill="#5a5ad0"/><rect x="4.600" y="11" width="1" height="1" fill="#5a5ad0"/><rect x="3.200" y="3.900" width="1" height="1" fill="#6a6ac8"/></g></svg><svg class="abs" style="left:22px;top:4px" width="32" height="13" viewBox="0 0 32 13"><path d="M0.300 4.300H4.400V1.300L10 6.700L4.400 12.100V9H0.300z" fill="#7e7e7e" stroke="#67676f" stroke-width=".7"/><path d="M1.200 7V5.600H5.200V4" fill="none" stroke="#a4a4a4" stroke-width="1"/><path d="M4.400 1.300L10 6.700L4.400 12.100" fill="none" stroke="#5555c8" stroke-width=".8" stroke-dasharray="1.200 .800"/><path d="M11 2.200H30L21.600 11.200H11z" fill="url(#pg)"/></svg></div>
<div class="c " style="left:569px;top:206px;width:68px;height:20px;background:#99cc00"><span class="t" style="transform:scaleX(0.898)">C2</span></div>
<div class="c " style="left:638px;top:206px;width:110px;height:20px;background:#99cc00"></div>
<div class="c " style="left:749px;top:206px;width:40px;height:20px;background:#99cc00"></div>
<div class="c " style="left:790px;top:206px;width:39px;height:20px;background:#99cc00"></div>
<div class="c " style="left:830px;top:206px;width:48px;height:20px;background:#99cc00"></div>
<div class="c " style="left:879px;top:206px;width:35px;height:20px;background:#99cc00"></div>
<div class="c ind" style="left:9px;top:227px;width:28px;height:20px;background:#eee"></div>
<div class="c " style="left:38px;top:227px;width:37px;height:20px;background:#ffc0ff"><div class="cb" style="left:13px;top:4px"><svg width="10" height="10" viewBox="0 0 10 10" style="position:absolute;left:0;top:0"><path d="M1.800 4.300L4.300 7.400L8.400 1.600" fill="none" stroke="#2b6acb" stroke-width="2.100"/></svg></div></div>
<div class="c " style="left:76px;top:227px;width:131px;height:20px;background:#ffc0ff"><svg class="abs" style="left:2px;top:2px" width="33" height="17" viewBox="0 0 33 17"><defs><linearGradient id="lg1" x1="0" y1="0" x2="0" y2="1"><stop offset="0" stop-color="#a9c4f6"/><stop offset="1" stop-color="#7f9fe8"/></linearGradient></defs><path d="M31 1.500H3.500V10.500H1.300L6 15.200L10.700 10.500H8.500V6H31z" fill="url(#lg1)" stroke="#6a7fd0" stroke-width="1"/><path d="M1 10.500L6 15.500L11 10.500" fill="none" stroke="#2a2a3a" stroke-width="1.300"/></svg><span class="abs" style="left:38px;top:0"><span class="t" style="transform:scaleX(0.946)">Start Loop</span></span></div>
<div class="c " style="left:208px;top:227px;width:107px;height:20px;background:#ffc0ff"></div>
<div class="c " style="left:316px;top:227px;width:195px;height:20px;background:#ffc0ff"></div>
<div class="c " style="left:512px;top:227px;width:56px;height:20px;background:#ffc0ff"></div>
<div class="c " style="left:569px;top:227px;width:68px;height:20px;background:#ffc0ff"></div>
<div class="c " style="left:638px;top:227px;width:110px;height:20px;background:#ffc0ff"><span class="t" style="transform:scaleX(0.950)">On Value-Ignore Bl...</span></div>
<div class="c " style="left:749px;top:227px;width:40px;height:20px;background:#ffc0ff"><span class="t" style="transform:scaleX(0.883)">F</span></div>
<div class="c " style="left:790px;top:227px;width:39px;height:20px;background:#ffc0ff"></div>
<div class="c " style="left:830px;top:227px;width:48px;height:20px;background:#ffc0ff"></div>
<div class="c " style="left:879px;top:227px;width:35px;height:20px;background:#ffc0ff"></div>
<div class="c ind" style="left:9px;top:248px;width:28px;height:20px;background:#eee"></div>
<div class="c " style="left:38px;top:248px;width:37px;height:20px;background:#c0c0ff"><div class="cb" style="left:13px;top:4px"><svg width="10" height="10" viewBox="0 0 10 10" style="position:absolute;left:0;top:0"><path d="M1.800 4.300L4.300 7.400L8.400 1.600" fill="none" stroke="#2b6acb" stroke-width="2.100"/></svg></div></div>
<div class="c " style="left:76px;top:248px;width:131px;height:20px;background:#c0c0ff"><span class="abs" style="left:17px;top:4px;width:16px;height:12px;background:linear-gradient(#cdcde0 0,#d2d2e3 1.500px,#ececf2 2px,#f5f5f8 5px,#fff 8px);border:1px solid #c3c3d6;border-top:none;border-bottom-color:#a3a3b3;border-right-color:#a9a9bb"><span class="abs" style="left:10px;top:0;width:3px;height:1px;background:#a9a9cc"></span></span><span class="abs" style="left:38px;top:0"><span class="t" style="transform:scaleX(0.899)">SAPMV45A - 4001</span></span></div>
<div class="c " style="left:208px;top:248px;width:107px;height:20px;background:#c0c0ff"></div>
<div class="c " style="left:316px;top:248px;width:195px;height:20px;background:#c0c0ff"><span class="t" style="transform:scaleX(0.963)">4.0: Screen Container for Overview ...</span></div>
<div class="c " style="left:512px;top:248px;width:56px;height:20px;background:#c0c0ff"></div>
<div class="c " style="left:569px;top:248px;width:68px;height:20px;background:#c0c0ff"></div>
<div class="c " style="left:638px;top:248px;width:110px;height:20px;background:#ffc0ff"></div>
<div class="c " style="left:749px;top:248px;width:40px;height:20px;background:#ffc0ff"></div>
<div class="c " style="left:790px;top:248px;width:39px;height:20px;background:#c0c0ff"></div>
<div class="c " style="left:830px;top:248px;width:48px;height:20px;background:#c0c0ff"></div>
<div class="c " style="left:879px;top:248px;width:35px;height:20px;background:#c0c0ff"></div>
<div class="c ind" style="left:9px;top:269px;width:28px;height:20px;background:#eee"></div>
<div class="c " style="left:38px;top:269px;width:37px;height:20px;background:#ffcc99"><div class="cb" style="left:13px;top:4px"><svg width="10" height="10" viewBox="0 0 10 10" style="position:absolute;left:0;top:0"><path d="M1.800 4.300L4.300 7.400L8.400 1.600" fill="none" stroke="#2b6acb" stroke-width="2.100"/></svg></div></div>
<div class="c " style="left:76px;top:269px;width:131px;height:20px;background:#ffcc99"></div>
<div class="c " style="left:208px;top:269px;width:107px;height:20px;background:#ffcc99"><span class="t" style="transform:scaleX(0.822)">BDC_OKCODE</span></div>
<div class="c " style="left:316px;top:269px;width:195px;height:20px;background:#ffcc99"><span class="t" style="transform:scaleX(0.914)">OK Code for this screen</span></div>
<div class="c " style="left:512px;top:269px;width:56px;height:20px;background:#ffcc99"><svg class="abs" style="left:5px;top:3px" width="15" height="14" viewBox="0 0 15 14"><path d="M1.400 12.300L3.800 9.600" stroke="#8a6e56" stroke-width="2.600" stroke-linecap="round"/><path d="M1.500 12.200L3.600 9.800" stroke="#f6e8c4" stroke-width="1" stroke-linecap="round"/><path d="M4.600 10.200C7.500 11.800 11.200 9.200 11.600 5.800" fill="none" stroke="#7b7b80" stroke-width="2"/><circle cx="6.200" cy="6.500" r="3.300" fill="#e6c684" stroke="#8b7660" stroke-width=".9"/><circle cx="10.700" cy="2.900" r="2.700" fill="#e9cc8c" stroke="#80786c" stroke-width=".9"/><path d="M8.200 4.600l1 1.600" stroke="#8b7660" stroke-width=".8"/><circle cx="5.600" cy="5.800" r="1.300" fill="#f6e8c0"/><circle cx="10.200" cy="2.400" r="1" fill="#f7ebca"/><g opacity=".55"><rect x="11" y="7.400" width="1" height="1.200" fill="#5a5ad0"/><rect x="4.600" y="11" width="1" height="1" fill="#5a5ad0"/><rect x="3.200" y="3.900" width="1" height="1" fill="#6a6ac8"/></g></svg><svg class="abs" style="left:22px;top:4px" width="32" height="13" viewBox="0 0 32 13"><path d="M0.300 4.300H4.400V1.300L10 6.700L4.400 12.100V9H0.300z" fill="#7e7e7e" stroke="#67676f" stroke-width=".7"/><path d="M1.200 7V5.600H5.200V4" fill="none" stroke="#a4a4a4" stroke-width="1"/><path d="M4.400 1.300L10 6.700L4.400 12.100" fill="none" stroke="#5555c8" stroke-width=".8" stroke-dasharray="1.200 .800"/><path d="M11 2.200H30L21.600 11.200H11z" fill="url(#pg)"/></svg></div>
<div class="c " style="left:569px;top:269px;width:68px;height:20px;background:#ffcc99"><span class="t" style="transform:scaleX(1.013)">/00</span></div>
<div class="c " style="left:638px;top:269px;width:110px;height:20px;background:#ffc0ff"></div>
<div class="c " style="left:749px;top:269px;width:40px;height:20px;background:#ffc0ff"></div>
<div class="c " style="left:790px;top:269px;width:39px;height:20px;background:#ffcc99"></div>
<div class="c " style="left:830px;top:269px;width:48px;height:20px;background:#ffcc99"></div>
<div class="c " style="left:879px;top:269px;width:35px;height:20px;background:#ffcc99"></div>
<div class="c ind" style="left:9px;top:290px;width:28px;height:20px;background:#eee"></div>
<div class="c " style="left:38px;top:290px;width:37px;height:20px;background:#ccffcc"><div class="cb" style="left:13px;top:4px"><svg width="10" height="10" viewBox="0 0 10 10" style="position:absolute;left:0;top:0"><path d="M1.800 4.300L4.300 7.400L8.400 1.600" fill="none" stroke="#2b6acb" stroke-width="2.100"/></svg></div></div>
<div class="c " style="left:76px;top:290px;width:131px;height:20px;background:#ccffcc"></div>
<div class="c " style="left:208px;top:290px;width:107px;height:20px;background:#ccffcc"><span class="t" style="transform:scaleX(0.819)">VBKD-BSTKD</span></div>
<div class="c " style="left:316px;top:290px;width:195px;height:20px;background:#ccffcc"><span class="t" style="transform:scaleX(0.934)">Customer purchase order number</span></div>
<div class="c " style="left:512px;top:290px;width:56px;height:20px;background:#ccffcc"><span class="abs" style="left:4px;top:2px;width:16px;height:16px;border:1px solid #7a807d;background:#f8fbf8;box-shadow:inset 1px 1px 0 0 #86ac86,inset 0 0 0 1px #848c88,inset 0 0 0 2px #e2ece2"></span><svg class="abs" style="left:6px;top:3.300px" width="12" height="12" viewBox="0 0 12 12"><path d="M1 3h3.200L6 5l1.800-2H11L7.800 6.500 11 10H7.800L6 8 4.200 10H1l3.200-3.500z" fill="#66ad69"/><path d="M7.800 3H11L8.700 5.600 7.300 4.600z" fill="#5d665f"/><path d="M7.600 7.800L11 10H7.800L6.600 8.600z" fill="#5d665f"/><path d="M1 3l3.200 0 6.800 7-3.200 0z" fill="#4c9a52" opacity=".7"/><path d="M1.500 10L4.700 6.500" stroke="#a6d4a8" stroke-width=".7"/><path d="M1 10.400h5" stroke="#6f7a70" stroke-width=".8"/></svg><svg class="abs" style="left:22px;top:4px" width="32" height="13" viewBox="0 0 32 13"><path d="M0.300 4.300H4.400V1.300L10 6.700L4.400 12.100V9H0.300z" fill="#7e7e7e" stroke="#67676f" stroke-width=".7"/><path d="M1.200 7V5.600H5.200V4" fill="none" stroke="#a4a4a4" stroke-width="1"/><path d="M4.400 1.300L10 6.700L4.400 12.100" fill="none" stroke="#5555c8" stroke-width=".8" stroke-dasharray="1.200 .800"/><path d="M11 2.200H30L21.600 11.200H11z" fill="url(#pg)"/></svg></div>
<div class="c " style="left:569px;top:290px;width:68px;height:20px;background:#ccffcc"><span class="t" style="transform:scaleX(0.883)">F</span></div>
<div class="c " style="left:638px;top:290px;width:110px;height:20px;background:#ffc0ff"><span class="t" style="transform:scaleX(0.951)">Header+Line Item</span></div>
<div class="c " style="left:749px;top:290px;width:40px;height:20px;background:#ffc0ff"></div>
<div class="c " style="left:790px;top:290px;width:39px;height:20px;background:#ccffcc"></div>
<div class="c " style="left:830px;top:290px;width:48px;height:20px;background:#ccffcc"></div>
<div class="c " style="left:879px;top:290px;width:35px;height:20px;background:#ccffcc"></div>
<div class="c ind" style="left:9px;top:311px;width:28px;height:20px;background:#eee"></div>
<div class="c " style="left:38px;top:311px;width:37px;height:20px;background:#ccffcc"><div class="cb" style="left:13px;top:4px"><svg width="10" height="10" viewBox="0 0 10 10" style="position:absolute;left:0;top:0"><path d="M1.800 4.300L4.300 7.400L8.400 1.600" fill="none" stroke="#2b6acb" stroke-width="2.100"/></svg></div></div>
<div class="c " style="left:76px;top:311px;width:131px;height:20px;background:#ccffcc"></div>
<div class="c " style="left:208px;top:311px;width:107px;height:20px;background:#ccffcc"><span class="t" style="transform:scaleX(0.819)">VBKD-BSTDK</span></div>
<div class="c " style="left:316px;top:311px;width:195px;height:20px;background:#ccffcc"><span class="t" style="transform:scaleX(0.944)">Customer purchase order date</span></div>
<div class="c " style="left:512px;top:311px;width:56px;height:20px;background:#ccffcc"><span class="abs" style="left:4px;top:2px;width:16px;height:16px;border:1px solid #7a807d;background:#f8fbf8;box-shadow:inset 1px 1px 0 0 #86ac86,inset 0 0 0 1px #848c88,inset 0 0 0 2px #e2ece2"></span><svg class="abs" style="left:6px;top:3.300px" width="12" height="12" viewBox="0 0 12 12"><path d="M1 3h3.200L6 5l1.800-2H11L7.800 6.500 11 10H7.800L6 8 4.200 10H1l3.200-3.500z" fill="#66ad69"/><path d="M7.800 3H11L8.700 5.600 7.300 4.600z" fill="#5d665f"/><path d="M7.600 7.800L11 10H7.800L6.600 8.600z" fill="#5d665f"/><path d="M1 3l3.200 0 6.800 7-3.200 0z" fill="#4c9a52" opacity=".7"/><path d="M1.500 10L4.700 6.500" stroke="#a6d4a8" stroke-width=".7"/><path d="M1 10.400h5" stroke="#6f7a70" stroke-width=".8"/></svg><svg class="abs" style="left:22px;top:4px" width="32" height="13" viewBox="0 0 32 13"><path d="M0.300 4.300H4.400V1.300L10 6.700L4.400 12.100V9H0.300z" fill="#7e7e7e" stroke="#67676f" stroke-width=".7"/><path d="M1.200 7V5.600H5.200V4" fill="none" stroke="#a4a4a4" stroke-width="1"/><path d="M4.400 1.300L10 6.700L4.400 12.100" fill="none" stroke="#5555c8" stroke-width=".8" stroke-dasharray="1.200 .800"/><path d="M11 2.200H30L21.600 11.200H11z" fill="url(#pg)"/></svg></div>
<div class="c " style="left:569px;top:311px;width:68px;height:20px;background:#ccffcc"><span class="t" style="transform:scaleX(0.805)">G</span></div>
<div class="c " style="left:638px;top:311px;width:110px;height:20px;background:#ffc0ff"><span class="t" style="transform:scaleX(0.951)">Header+Line Item</span></div>
<div class="c " style="left:749px;top:311px;width:40px;height:20px;background:#ffc0ff"></div>
<div class="c " style="left:790px;top:311px;width:39px;height:20px;background:#ccffcc"></div>
<div class="c " style="left:830px;top:311px;width:48px;height:20px;background:#ccffcc"></div>
<div class="c " style="left:879px;top:311px;width:35px;height:20px;background:#ccffcc"></div>
<div class="c ind" style="left:9px;top:332px;width:28px;height:20px;background:#eee"></div>
<div class="c " style="left:38px;top:332px;width:37px;height:20px;background:#ccffcc"><div class="cb" style="left:13px;top:4px"><svg width="10" height="10" viewBox="0 0 10 10" style="position:absolute;left:0;top:0"><path d="M1.800 4.300L4.300 7.400L8.400 1.600" fill="none" stroke="#2b6acb" stroke-width="2.100"/></svg></div></div>
<div class="c " style="left:76px;top:332px;width:131px;height:20px;background:#ccffcc"></div>
<div class="c " style="left:208px;top:332px;width:107px;height:20px;background:#ccffcc"><span class="t" style="transform:scaleX(0.844)">KUAGV-KUNNR</span></div>
<div class="c " style="left:316px;top:332px;width:195px;height:20px;background:#ccffcc"><span class="t" style="transform:scaleX(0.969)">Sold-to party</span></div>
<div class="c " style="left:512px;top:332px;width:56px;height:20px;background:#ccffcc"><span class="abs" style="left:4px;top:2px;width:16px;height:16px;border:1px solid #7a807d;background:#f8fbf8;box-shadow:inset 1px 1px 0 0 #86ac86,inset 0 0 0 1px #848c88,inset 0 0 0 2px #e2ece2"></span><svg class="abs" style="left:6px;top:3.300px" width="12" height="12" viewBox="0 0 12 12"><path d="M1 3h3.200L6 5l1.800-2H11L7.800 6.500 11 10H7.800L6 8 4.200 10H1l3.200-3.500z" fill="#66ad69"/><path d="M7.800 3H11L8.700 5.600 7.300 4.600z" fill="#5d665f"/><path d="M7.600 7.800L11 10H7.800L6.600 8.600z" fill="#5d665f"/><path d="M1 3l3.200 0 6.800 7-3.200 0z" fill="#4c9a52" opacity=".7"/><path d="M1.500 10L4.700 6.500" stroke="#a6d4a8" stroke-width=".7"/><path d="M1 10.400h5" stroke="#6f7a70" stroke-width=".8"/></svg><svg class="abs" style="left:22px;top:4px" width="32" height="13" viewBox="0 0 32 13"><path d="M0.300 4.300H4.400V1.300L10 6.700L4.400 12.100V9H0.300z" fill="#7e7e7e" stroke="#67676f" stroke-width=".7"/><path d="M1.200 7V5.600H5.200V4" fill="none" stroke="#a4a4a4" stroke-width="1"/><path d="M4.400 1.300L10 6.700L4.400 12.100" fill="none" stroke="#5555c8" stroke-width=".8" stroke-dasharray="1.200 .800"/><path d="M11 2.200H30L21.600 11.200H11z" fill="url(#pg)"/></svg></div>
<div class="c " style="left:569px;top:332px;width:68px;height:20px;background:#ccffcc"><span class="t" style="transform:scaleX(0.808)">E</span></div>
<div class="c " style="left:638px;top:332px;width:110px;height:20px;background:#ffc0ff"><span class="t" style="transform:scaleX(0.951)">Header+Line Item</span></div>
<div class="c " style="left:749px;top:332px;width:40px;height:20px;background:#ffc0ff"></div>
<div class="c " style="left:790px;top:332px;width:39px;height:20px;background:#ccffcc"></div>
<div class="c " style="left:830px;top:332px;width:48px;height:20px;background:#ccffcc"></div>
<div class="c " style="left:879px;top:332px;width:35px;height:20px;background:#ccffcc"></div>
<div class="c ind" style="left:9px;top:353px;width:28px;height:20px;background:#eee"></div>
<div class="c " style="left:38px;top:353px;width:37px;height:20px;background:#ffcc99"><div class="cb" style="left:13px;top:4px"><svg width="10" height="10" viewBox="0 0 10 10" style="position:absolute;left:0;top:0"><path d="M1.800 4.300L4.300 7.400L8.400 1.600" fill="none" stroke="#2b6acb" stroke-width="2.100"/></svg></div></div>
<div class="c " style="left:76px;top:353px;width:131px;height:20px;background:#ffcc99"></div>
<div class="c " style="left:208px;top:353px;width:107px;height:20px;background:#ffcc99"><span class="t" style="transform:scaleX(0.835)">BDC_CURSOR</span></div>
<div class="c " style="left:316px;top:353px;width:195px;height:20px;background:#ffcc99"><span class="t" style="transform:scaleX(0.934)">Cursor location</span></div>
<div class="c " style="left:512px;top:353px;width:56px;height:20px;background:#ffcc99"><svg class="abs" style="left:5px;top:3px" width="15" height="14" viewBox="0 0 15 14"><path d="M1.400 12.300L3.800 9.600" stroke="#8a6e56" stroke-width="2.600" stroke-linecap="round"/><path d="M1.500 12.200L3.600 9.800" stroke="#f6e8c4" stroke-width="1" stroke-linecap="round"/><path d="M4.600 10.200C7.500 11.800 11.200 9.200 11.600 5.800" fill="none" stroke="#7b7b80" stroke-width="2"/><circle cx="6.200" cy="6.500" r="3.300" fill="#e6c684" stroke="#8b7660" stroke-width=".9"/><circle cx="10.700" cy="2.900" r="2.700" fill="#e9cc8c" stroke="#80786c" stroke-width=".9"/><path d="M8.200 4.600l1 1.600" stroke="#8b7660" stroke-width=".8"/><circle cx="5.600" cy="5.800" r="1.300" fill="#f6e8c0"/><circle cx="10.200" cy="2.400" r="1" fill="#f7ebca"/><g opacity=".55"><rect x="11" y="7.400" width="1" height="1.200" fill="#5a5ad0"/><rect x="4.600" y="11" width="1" height="1" fill="#5a5ad0"/><rect x="3.200" y="3.900" width="1" height="1" fill="#6a6ac8"/></g></svg><svg class="abs" style="left:22px;top:4px" width="32" height="13" viewBox="0 0 32 13"><path d="M0.300 4.300H4.400V1.300L10 6.700L4.400 12.100V9H0.300z" fill="#7e7e7e" stroke="#67676f" stroke-width=".7"/><path d="M1.200 7V5.600H5.200V4" fill="none" stroke="#a4a4a4" stroke-width="1"/><path d="M4.400 1.300L10 6.700L4.400 12.100" fill="none" stroke="#5555c8" stroke-width=".8" stroke-dasharray="1.200 .800"/><path d="M11 2.200H30L21.600 11.200H11z" fill="url(#pg)"/></svg></div>
<div class="c " style="left:569px;top:353px;width:68px;height:20px;background:#ffcc99"><span class="t" style="transform:scaleX(0.946)">RV45A-K...</span></div>
<div class="c " style="left:638px;top:353px;width:110px;height:20px;background:#ffc0ff"></div>
<div class="c " style="left:749px;top:353px;width:40px;height:20px;background:#ffc0ff"></div>
<div class="c " style="left:790px;top:353px;width:39px;height:20px;background:#ffcc99"></div>
<div class="c " style="left:830px;top:353px;width:48px;height:20px;background:#ffcc99"></div>
<div class="c " style="left:879px;top:353px;width:35px;height:20px;background:#ffcc99"></div>
<div class="c ind" style="left:9px;top:374px;width:28px;height:20px;background:#eee"></div>
<div class="c " style="left:38px;top:374px;width:37px;height:20px;background:#ccffcc"><div class="cb" style="left:13px;top:4px"><svg width="10" height="10" viewBox="0 0 10 10" style="position:absolute;left:0;top:0"><path d="M1.800 4.300L4.300 7.400L8.400 1.600" fill="none" stroke="#2b6acb" stroke-width="2.100"/></svg></div></div>
<div class="c " style="left:76px;top:374px;width:131px;height:20px;background:#ccffcc"></div>
<div class="c " style="left:208px;top:374px;width:107px;height:20px;background:#ccffcc"><span class="t" style="transform:scaleX(0.894)">RV45A-MABNR(02)</span></div>
<div class="c " style="left:316px;top:374px;width:195px;height:20px;background:#ccffcc"><span class="t" style="transform:scaleX(0.920)">Material Number</span></div>
<div class="c " style="left:512px;top:374px;width:56px;height:20px;background:#ccffcc"><span class="abs" style="left:4px;top:2px;width:16px;height:16px;border:1px solid #7a807d;background:#f8fbf8;box-shadow:inset 1px 1px 0 0 #86ac86,inset 0 0 0 1px #848c88,inset 0 0 0 2px #e2ece2"></span><svg class="abs" style="left:6px;top:3.300px" width="12" height="12" viewBox="0 0 12 12"><path d="M1 3h3.200L6 5l1.800-2H11L7.800 6.500 11 10H7.800L6 8 4.200 10H1l3.200-3.500z" fill="#66ad69"/><path d="M7.800 3H11L8.700 5.600 7.300 4.600z" fill="#5d665f"/><path d="M7.600 7.800L11 10H7.800L6.600 8.600z" fill="#5d665f"/><path d="M1 3l3.200 0 6.800 7-3.200 0z" fill="#4c9a52" opacity=".7"/><path d="M1.500 10L4.700 6.500" stroke="#a6d4a8" stroke-width=".7"/><path d="M1 10.400h5" stroke="#6f7a70" stroke-width=".8"/></svg><svg class="abs" style="left:22px;top:4px" width="32" height="13" viewBox="0 0 32 13"><path d="M0.300 4.300H4.400V1.300L10 6.700L4.400 12.100V9H0.300z" fill="#7e7e7e" stroke="#67676f" stroke-width=".7"/><path d="M1.200 7V5.600H5.200V4" fill="none" stroke="#a4a4a4" stroke-width="1"/><path d="M4.400 1.300L10 6.700L4.400 12.100" fill="none" stroke="#5555c8" stroke-width=".8" stroke-dasharray="1.200 .800"/><path d="M11 2.200H30L21.600 11.200H11z" fill="url(#pg)"/></svg></div>
<div class="c " style="left:569px;top:374px;width:68px;height:20px;background:#ccffcc"><span class="t" style="font-family:'Liberation Mono',monospace;transform:scaleX(.62);-webkit-text-stroke:0.6px #000;position:relative;top:-0.3px">I</span></div>
<div class="c " style="left:638px;top:374px;width:110px;height:20px;background:#ffc0ff"><span class="t" style="transform:scaleX(0.951)">Header+Line Item</span></div>
<div class="c " style="left:749px;top:374px;width:40px;height:20px;background:#ffc0ff"></div>
<div class="c " style="left:790px;top:374px;width:39px;height:20px;background:#ccffcc"></div>
<div class="c " style="left:830px;top:374px;width:48px;height:20px;background:#ccffcc"></div>
<div class="c " style="left:879px;top:374px;width:35px;height:20px;background:#ccffcc"></div>
<div class="c ind" style="left:9px;top:395px;width:28px;height:20px;background:#eee"></div>
<div class="c " style="left:38px;top:395px;width:37px;height:20px;background:#ccffcc"><div class="cb" style="left:13px;top:4px"><svg width="10" height="10" viewBox="0 0 10 10" style="position:absolute;left:0;top:0"><path d="M1.800 4.300L4.300 7.400L8.400 1.600" fill="none" stroke="#2b6acb" stroke-width="2.100"/></svg></div></div>
<div class="c " style="left:76px;top:395px;width:131px;height:20px;background:#ccffcc"></div>
<div class="c " style="left:208px;top:395px;width:107px;height:20px;background:#ccffcc"><span class="t" style="transform:scaleX(0.883)">RV45A-KWMENG(02)</span></div>
<div class="c " style="left:316px;top:395px;width:195px;height:20px;background:#ccffcc"><span class="t" style="transform:scaleX(0.935)">Cumulative Order Quantity in Sales U...</span></div>
<div class="c " style="left:512px;top:395px;width:56px;height:20px;background:#ccffcc"><span class="abs" style="left:4px;top:2px;width:16px;height:16px;border:1px solid #7a807d;background:#f8fbf8;box-shadow:inset 1px 1px 0 0 #86ac86,inset 0 0 0 1px #848c88,inset 0 0 0 2px #e2ece2"></span><svg class="abs" style="left:6px;top:3.300px" width="12" height="12" viewBox="0 0 12 12"><path d="M1 3h3.200L6 5l1.800-2H11L7.800 6.500 11 10H7.800L6 8 4.200 10H1l3.200-3.500z" fill="#66ad69"/><path d="M7.800 3H11L8.700 5.600 7.300 4.600z" fill="#5d665f"/><path d="M7.600 7.800L11 10H7.800L6.600 8.600z" fill="#5d665f"/><path d="M1 3l3.200 0 6.800 7-3.200 0z" fill="#4c9a52" opacity=".7"/><path d="M1.500 10L4.700 6.500" stroke="#a6d4a8" stroke-width=".7"/><path d="M1 10.400h5" stroke="#6f7a70" stroke-width=".8"/></svg><svg class="abs" style="left:22px;top:4px" width="32" height="13" viewBox="0 0 32 13"><path d="M0.300 4.300H4.400V1.300L10 6.700L4.400 12.100V9H0.300z" fill="#7e7e7e" stroke="#67676f" stroke-width=".7"/><path d="M1.200 7V5.600H5.200V4" fill="none" stroke="#a4a4a4" stroke-width="1"/><path d="M4.400 1.300L10 6.700L4.400 12.100" fill="none" stroke="#5555c8" stroke-width=".8" stroke-dasharray="1.200 .800"/><path d="M11 2.200H30L21.600 11.200H11z" fill="url(#pg)"/></svg></div>
<div class="c " style="left:569px;top:395px;width:68px;height:20px;background:#ccffcc"><span class="t" style="font-family:'Liberation Mono',monospace;transform:scaleX(.62);-webkit-text-stroke:0.6px #000;position:relative;top:-0.3px">J</span></div>
<div class="c " style="left:638px;top:395px;width:110px;height:20px;background:#ffc0ff"><span class="t" style="transform:scaleX(0.951)">Header+Line Item</span></div>
<div class="c " style="left:749px;top:395px;width:40px;height:20px;background:#ffc0ff"></div>
<div class="c " style="left:790px;top:395px;width:39px;height:20px;background:#ccffcc"></div>
<div class="c " style="left:830px;top:395px;width:48px;height:20px;background:#ccffcc"></div>
<div class="c " style="left:879px;top:395px;width:35px;height:20px;background:#ccffcc"></div>
<div class="c ind" style="left:9px;top:416px;width:28px;height:20px;background:#eee"></div>
<div class="c " style="left:38px;top:416px;width:37px;height:20px;background:#ffc0ff"><div class="cb" style="left:13px;top:4px"><svg width="10" height="10" viewBox="0 0 10 10" style="position:absolute;left:0;top:0"><path d="M1.800 4.300L4.300 7.400L8.400 1.600" fill="none" stroke="#2b6acb" stroke-width="2.100"/></svg></div></div>
<div class="c " style="left:76px;top:416px;width:131px;height:20px;background:#ffc0ff"><svg class="abs" style="left:2px;top:1px" width="33" height="17" viewBox="0 0 33 17"><path d="M31 15.500H3.500V6.500H1.300L6 1.800L10.700 6.500H8.500V11H31z" fill="url(#lg1)" stroke="#6a7fd0" stroke-width="1"/><path d="M1 6.500L6 1.500L11 6.500" fill="none" stroke="#2a2a3a" stroke-width="1.300"/></svg><span class="abs" style="left:38px;top:0"><span class="t" style="transform:scaleX(0.898)">End Loop</span></span></div>
<div class="c " style="left:208px;top:416px;width:107px;height:20px;background:#ffc0ff"></div>
<div class="c " style="left:316px;top:416px;width:195px;height:20px;background:#ffc0ff"></div>
<div class="c " style="left:512px;top:416px;width:56px;height:20px;background:#ffc0ff"></div>
<div class="c " style="left:569px;top:416px;width:68px;height:20px;background:#ffc0ff"></div>
<div class="c " style="left:638px;top:416px;width:110px;height:20px;background:#ffc0ff"></div>
<div class="c " style="left:749px;top:416px;width:40px;height:20px;background:#ffc0ff"></div>
<div class="c " style="left:790px;top:416px;width:39px;height:20px;background:#ffc0ff"></div>
<div class="c " style="left:830px;top:416px;width:48px;height:20px;background:#ffc0ff"></div>
<div class="c " style="left:879px;top:416px;width:35px;height:20px;background:#ffc0ff"></div>
<div class="c ind" style="left:9px;top:437px;width:28px;height:20px;background:#eee"></div>
<div class="c " style="left:38px;top:437px;width:37px;height:20px;background:#c0c0ff"><div class="cb" style="left:13px;top:4px"><svg width="10" height="10" viewBox="0 0 10 10" style="position:absolute;left:0;top:0"><path d="M1.800 4.300L4.300 7.400L8.400 1.600" fill="none" stroke="#2b6acb" stroke-width="2.100"/></svg></div></div>
<div class="c " style="left:76px;top:437px;width:131px;height:20px;background:#c0c0ff"><span class="abs" style="left:17px;top:4px;width:16px;height:12px;background:linear-gradient(#cdcde0 0,#d2d2e3 1.500px,#ececf2 2px,#f5f5f8 5px,#fff 8px);border:1px solid #c3c3d6;border-top:none;border-bottom-color:#a3a3b3;border-right-color:#a9a9bb"><span class="abs" style="left:10px;top:0;width:3px;height:1px;background:#a9a9cc"></span></span><span class="abs" style="left:38px;top:0"><span class="t" style="transform:scaleX(0.899)">SAPMV45A - 4001</span></span></div>
<div class="c " style="left:208px;top:437px;width:107px;height:20px;background:#c0c0ff"></div>
<div class="c " style="left:316px;top:437px;width:195px;height:20px;background:#c0c0ff"><span class="t" style="transform:scaleX(0.963)">4.0: Screen Container for Overview ...</span></div>
<div class="c " style="left:512px;top:437px;width:56px;height:20px;background:#c0c0ff"></div>
<div class="c " style="left:569px;top:437px;width:68px;height:20px;background:#c0c0ff"></div>
<div class="c " style="left:638px;top:437px;width:110px;height:20px;background:#c0c0ff"></div>
<div class="c " style="left:749px;top:437px;width:40px;height:20px;background:#c0c0ff"></div>
<div class="c " style="left:790px;top:437px;width:39px;height:20px;background:#c0c0ff"></div>
<div class="c " style="left:830px;top:437px;width:48px;height:20px;background:#c0c0ff"></div>
<div class="c " style="left:879px;top:437px;width:35px;height:20px;background:#c0c0ff"></div>
<div class="c ind" style="left:9px;top:458px;width:28px;height:20px;background:#eee"></div>
<div class="c " style="left:38px;top:458px;width:37px;height:20px;background:#ffcc99"><div class="cb" style="left:13px;top:4px"><svg width="10" height="10" viewBox="0 0 10 10" style="position:absolute;left:0;top:0"><path d="M1.800 4.300L4.300 7.400L8.400 1.600" fill="none" stroke="#2b6acb" stroke-width="2.100"/></svg></div></div>
<div class="c " style="left:76px;top:458px;width:131px;height:20px;background:#ffcc99"></div>
<div class="c " style="left:208px;top:458px;width:107px;height:20px;background:#ffcc99"><span class="t" style="transform:scaleX(0.822)">BDC_OKCODE</span></div>
<div class="c " style="left:316px;top:458px;width:195px;height:20px;background:#ffcc99"><span class="t" style="transform:scaleX(0.914)">OK Code for this screen</span></div>
<div class="c " style="left:512px;top:458px;width:56px;height:20px;background:#ffcc99"><svg class="abs" style="left:5px;top:3px" width="15" height="14" viewBox="0 0 15 14"><path d="M1.400 12.300L3.800 9.600" stroke="#8a6e56" stroke-width="2.600" stroke-linecap="round"/><path d="M1.500 12.200L3.600 9.800" stroke="#f6e8c4" stroke-width="1" stroke-linecap="round"/><path d="M4.600 10.200C7.500 11.800 11.200 9.200 11.600 5.800" fill="none" stroke="#7b7b80" stroke-width="2"/><circle cx="6.200" cy="6.500" r="3.300" fill="#e6c684" stroke="#8b7660" stroke-width=".9"/><circle cx="10.700" cy="2.900" r="2.700" fill="#e9cc8c" stroke="#80786c" stroke-width=".9"/><path d="M8.200 4.600l1 1.600" stroke="#8b7660" stroke-width=".8"/><circle cx="5.600" cy="5.800" r="1.300" fill="#f6e8c0"/><circle cx="10.200" cy="2.400" r="1" fill="#f7ebca"/><g opacity=".55"><rect x="11" y="7.400" width="1" height="1.200" fill="#5a5ad0"/><rect x="4.600" y="11" width="1" height="1" fill="#5a5ad0"/><rect x="3.200" y="3.900" width="1" height="1" fill="#6a6ac8"/></g></svg><svg class="abs" style="left:22px;top:4px" width="32" height="13" viewBox="0 0 32 13"><path d="M0.300 4.300H4.400V1.300L10 6.700L4.400 12.100V9H0.300z" fill="#7e7e7e" stroke="#67676f" stroke-width=".7"/><path d="M1.200 7V5.600H5.200V4" fill="none" stroke="#a4a4a4" stroke-width="1"/><path d="M4.400 1.300L10 6.700L4.400 12.100" fill="none" stroke="#5555c8" stroke-width=".8" stroke-dasharray="1.200 .800"/><path d="M11 2.200H30L21.600 11.200H11z" fill="url(#pg)"/></svg></div>
<div class="c " style="left:569px;top:458px;width:68px;height:20px;background:#ffcc99"><span class="t" style="transform:scaleX(0.942)">=SICH</span></div>
<div class="c " style="left:638px;top:458px;width:110px;height:20px;background:#ffcc99"></div>
<div class="c " style="left:749px;top:458px;width:40px;height:20px;background:#ffcc99"></div>
<div class="c " style="left:790px;top:458px;width:39px;height:20px;background:#ffcc99"></div>
<div class="c " style="left:830px;top:458px;width:48px;height:20px;background:#ffcc99"></div>
<div class="c " style="left:879px;top:458px;width:35px;height:20px;background:#ffcc99"></div>
<div class="c ind" style="left:9px;top:479px;width:28px;height:20px;background:#eee"></div>
<div class="c " style="left:38px;top:479px;width:37px;height:20px;background:#ffcc99"><div class="cb" style="left:13px;top:4px"><svg width="10" height="10" viewBox="0 0 10 10" style="position:absolute;left:0;top:0"><path d="M1.800 4.300L4.300 7.400L8.400 1.600" fill="none" stroke="#2b6acb" stroke-width="2.100"/></svg></div></div>
<div class="c " style="left:76px;top:479px;width:131px;height:20px;background:#ffcc99"></div>
<div class="c " style="left:208px;top:479px;width:107px;height:20px;background:#ffcc99"><span class="t" style="transform:scaleX(0.835)">BDC_CURSOR</span></div>
<div class="c " style="left:316px;top:479px;width:195px;height:20px;background:#ffcc99"><span class="t" style="transform:scaleX(0.934)">Cursor location</span></div>
<div class="c " style="left:512px;top:479px;width:56px;height:20px;background:#ffcc99"><svg class="abs" style="left:5px;top:3px" width="15" height="14" viewBox="0 0 15 14"><path d="M1.400 12.300L3.800 9.600" stroke="#8a6e56" stroke-width="2.600" stroke-linecap="round"/><path d="M1.500 12.200L3.600 9.800" stroke="#f6e8c4" stroke-width="1" stroke-linecap="round"/><path d="M4.600 10.200C7.500 11.800 11.200 9.200 11.600 5.800" fill="none" stroke="#7b7b80" stroke-width="2"/><circle cx="6.200" cy="6.500" r="3.300" fill="#e6c684" stroke="#8b7660" stroke-width=".9"/><circle cx="10.700" cy="2.900" r="2.700" fill="#e9cc8c" stroke="#80786c" stroke-width=".9"/><path d="M8.200 4.600l1 1.600" stroke="#8b7660" stroke-width=".8"/><circle cx="5.600" cy="5.800" r="1.300" fill="#f6e8c0"/><circle cx="10.200" cy="2.400" r="1" fill="#f7ebca"/><g opacity=".55"><rect x="11" y="7.400" width="1" height="1.200" fill="#5a5ad0"/><rect x="4.600" y="11" width="1" height="1" fill="#5a5ad0"/><rect x="3.200" y="3.900" width="1" height="1" fill="#6a6ac8"/></g></svg><svg class="abs" style="left:22px;top:4px" width="32" height="13" viewBox="0 0 32 13"><path d="M0.300 4.300H4.400V1.300L10 6.700L4.400 12.100V9H0.300z" fill="#7e7e7e" stroke="#67676f" stroke-width=".7"/><path d="M1.200 7V5.600H5.200V4" fill="none" stroke="#a4a4a4" stroke-width="1"/><path d="M4.400 1.300L10 6.700L4.400 12.100" fill="none" stroke="#5555c8" stroke-width=".8" stroke-dasharray="1.200 .800"/><path d="M11 2.200H30L21.600 11.200H11z" fill="url(#pg)"/></svg></div>
<div class="c " style="left:569px;top:479px;width:68px;height:20px;background:#ffcc99"><span class="t" style="transform:scaleX(0.945)">RV45A-MA...</span></div>
<div class="c " style="left:638px;top:479px;width:110px;height:20px;background:#ffcc99"></div>
<div class="c " style="left:749px;top:479px;width:40px;height:20px;background:#ffcc99"></div>
<div class="c " style="left:790px;top:479px;width:39px;height:20px;background:#ffcc99"></div>
<div class="c " style="left:830px;top:479px;width:48px;height:20px;background:#ffcc99"></div>
<div class="c " style="left:879px;top:479px;width:35px;height:20px;background:#ffcc99"></div>
<div class="abs" style="left:915px;top:32px;width:1px;height:468px;background:#e4e4e8"></div><svg class="abs" style="left:13px;top:35px" width="18" height="18" viewBox="0 0 18 18"><defs><linearGradient id="hb" x1="0" y1="0" x2="1" y2="1"><stop offset="0" stop-color="#b4d2f4"/><stop offset=".35" stop-color="#8e9fdc"/><stop offset=".7" stop-color="#8878b8"/></linearGradient><linearGradient id="hy" x1="0" y1="0" x2="1" y2="0"><stop offset="0" stop-color="#eef09c"/><stop offset="1" stop-color="#93a57c"/></linearGradient><linearGradient id="hv" x1="0" y1="0" x2="0" y2="1"><stop offset="0" stop-color="#eef09c"/><stop offset="1" stop-color="#93a57c"/></linearGradient><linearGradient id="hw" x1="0" y1="0" x2="1" y2="0"><stop offset="0" stop-color="#fff"/><stop offset="1" stop-color="#e4e8e0"/></linearGradient></defs><path d="M1.300 1.300h14l-3.500 3.500H5v7L1.300 15z" fill="url(#hb)"/><path d="M15.300 1.300H1.300V15" stroke="#357d98" stroke-width="1.300" fill="none"/><rect x="4.500" y="4.500" width="12" height="12" fill="url(#hw)" stroke="#7d7d7d"/><rect x="5" y="5" width="11" height="3" fill="url(#hy)"/><rect x="5" y="8" width="3" height="8" fill="url(#hv)"/><path d="M16.500 4.500H4.500V16.500H8.500V8.500H16.500M4.500 8.500H8.500" stroke="#87863a" stroke-width="1" fill="none"/><path d="M8.500 12.500h8" stroke="#7d7d7d" stroke-width="1" fill="none"/></svg><svg class="abs" style="left:65.500px;top:36px" width="7" height="7.500" viewBox="0 0 8 8"><path d="M.7 1.600c0-1.400 6.600-1.400 6.600 0L5 4.300V7.300H3V4.300z" fill="#cfcfcf" stroke="#a9a9a9" stroke-width=".9"/><ellipse cx="4" cy="1.500" rx="2.600" ry=".7" fill="#e9e9e9"/></svg><svg class="abs" style="left:12.500px;top:60.500px" width="8" height="9.800" viewBox="0 0 9 11"><path d="M1.800 1.500h5.400a.9 .9 0 0 1 .9 .9v.9L5.700 6.300v3.700H3.300V6.300L.9 3.300v-.9a.9 .9 0 0 1 .9-.9z" fill="#fdfdfd" stroke="#1c1c1c" stroke-width="1.100" stroke-linejoin="round"/><path d="M1.500 3.400h6" stroke="#1c1c1c" stroke-width=".7"/></svg><div class="abs" style="left:51px;top:59px;width:12px;height:12px;border:1px solid #8c8c8c;background:#f6f6f6"><div style="position:absolute;left:2px;top:2px;width:6px;height:6px;background:linear-gradient(#3b9af0,#8fd0ff 60%,#c9ecff);outline:1px solid #58aef0"></div></div><div class="abs" style="left:638px;top:55px;width:110px;height:20px;border:1px dotted #111;background:#fff"></div><svg class="abs" style="left:738px;top:64px" width="6" height="4"><path d="M0 .3h5.600L2.800 3.300z" fill="#333"/></svg><svg class="abs" style="left:8px;top:32px" width="4" height="4"><path d="M0 0h4L0 4z" fill="#6e6e6e"/></svg><svg class="abs" style="left:910px;top:32px" width="5" height="5"><path d="M0 0h5v5z" fill="#4a4a4a"/></svg>
<svg width="0" height="0" style="position:absolute"><defs><linearGradient id="bl" x1="0" y1="0" x2="1" y2="1"><stop offset="0" stop-color="#49a6ee"/><stop offset="1" stop-color="#1f84dc"/></linearGradient></defs></svg><div class="abs" style="left:0;top:587px;width:924px;height:1px;background:#bcbcbc"></div><div class="abs" style="left:0;top:588px;width:924px;height:3px;background:linear-gradient(#e2e2e2,#fafafa)"></div><div class="abs" style="left:0;top:591px;width:928px;height:39px;background:#535353"></div><div class="abs" style="left:0;top:591px;width:809px;height:34px;border-radius:2px 4px 4px 2px;background:linear-gradient(#f6f7f8 0,#eceef0 3px,#e0e4e7 12px,#c6cbd2 14px,#c3c8cf 24px,#d0d4d9 30px,#dfe2e6 32px,#f2f3f5 33px,#c9ccd2 34px);box-shadow:inset -1px 0 0 #eef0f2"></div><div class="abs" style="left:0;top:625px;width:928px;height:5px;background:linear-gradient(#383840,#4d4d59)"></div><div class="abs" style="left:708px;top:627px;width:1px;height:3px;background:#111"></div><div class="abs" style="left:773px;top:627px;width:1px;height:3px;background:#111"></div><div class="abs" style="left:834px;top:627px;width:1px;height:3px;background:#111"></div><div class="abs" style="left:888px;top:627px;width:1px;height:3px;background:#111"></div><div class="abs" style="left:899px;top:627px;width:1px;height:3px;background:#111"></div><div class="abs" style="left:909px;top:627px;width:1px;height:3px;background:#111"></div><div class="abs" style="left:200px;top:593px;width:101px;height:30px;border:1px solid #f1a545;border-radius:3px;background:linear-gradient(#fdebcc 0,#fcdba4 9px,#f9c163 11px,#fbd283 22px,#fde3a4 28px);box-shadow:inset 0 0 0 1px #fef0d4"></div><div class="abs" style="left:310px;top:593px;width:93px;height:30px;border:1px solid #f1a545;border-radius:3px;background:linear-gradient(#fdebcc 0,#fcdba4 9px,#f9c163 11px,#fbd283 22px,#fde3a4 28px);box-shadow:inset 0 0 0 1px #fef0d4"></div><div class="tb" style="left:13px;top:600px"><span class="t" style="transform:scaleX(0.918)">Edit</span></div><div class="tb" style="left:45px;top:600px"><span class="t" style="transform:scaleX(0.922)">Fast Map</span></div><div class="tb" style="left:139px;top:600px"><span class="t" style="transform:scaleX(0.875)">Simple View</span></div><div class="tb" style="left:230.5px;top:600px"><span class="t" style="transform:scaleX(0.925)">Advance View</span></div><div class="tb" style="left:340.5px;top:600px"><span class="t" style="transform:scaleX(0.936)">Active Rows</span></div><div class="tb" style="left:435px;top:600px"><span class="t" style="transform:scaleX(0.953)">Inactive Rows</span></div><div class="tb" style="left:539.5px;top:600px"><span class="t" style="transform:scaleX(0.899)">All Rows</span></div><div class="tb" style="left:593px;top:600px"><span class="t" style="transform:scaleX(0.876)">iBook</span></div><svg class="abs" style="left:35px;top:607px" width="6" height="3"><path d="M0 0h5.600L2.800 3z" fill="#2a2a2a"/></svg><svg class="abs" style="left:93px;top:607px" width="6" height="3"><path d="M0 0h5.600L2.800 3z" fill="#2a2a2a"/></svg><svg class="abs" style="left:622px;top:607px" width="6" height="3"><path d="M0 0h5.600L2.800 3z" fill="#2a2a2a"/></svg><div class="abs" style="left:104px;top:595px;width:1px;height:26px;background:#8e929a;box-shadow:1px 0 0 #eef0f3"></div><div class="abs" style="left:305px;top:595px;width:1px;height:26px;background:#8e929a;box-shadow:1px 0 0 #eef0f3"></div><div class="abs" style="left:587px;top:595px;width:1px;height:26px;background:#8e929a;box-shadow:1px 0 0 #eef0f3"></div><div class="abs" style="left:3px;top:601px;width:2px;height:2px;background:#a9aeb7;box-shadow:1px 1px 0 #f4f5f7"></div><div class="abs" style="left:3px;top:605px;width:2px;height:2px;background:#a9aeb7;box-shadow:1px 1px 0 #f4f5f7"></div><div class="abs" style="left:3px;top:609px;width:2px;height:2px;background:#a9aeb7;box-shadow:1px 1px 0 #f4f5f7"></div><div class="abs" style="left:3px;top:613px;width:2px;height:2px;background:#a9aeb7;box-shadow:1px 1px 0 #f4f5f7"></div><div class="abs" style="left:633px;top:598px;width:60px;height:20px;border:1px solid #868a90;background:#fff"><span class="tb" style="left:1.500px;top:1px"><span class="t" style="transform:scaleX(0.938)">Sheet1</span></span><svg class="abs" style="left:49px;top:8px" width="6" height="3"><path d="M0 0h5.600L2.800 3z" fill="#2a2a2a"/></svg></div><svg class="abs" style="left:799px;top:607px" width="6" height="4"><path d="M0 0h5.600L2.800 3.500z" fill="#76809a"/></svg><svg class="abs" style="left:112px;top:600px" width="25" height="15" viewBox="0 0 25 15"><defs><linearGradient id="gl" x1="0" y1=".3" x2="1" y2=".7"><stop offset="0" stop-color="#fbfbfb"/><stop offset=".3" stop-color="#e4e4e4"/><stop offset=".68" stop-color="#70747e"/><stop offset="1" stop-color="#d0d2d6"/></linearGradient></defs><path d="M1.500 4.600L6.200 2.400L8.500 1.600" fill="none" stroke="#a9a9a9" stroke-width="1"/><path d="M6.200 2.400L8.600 1.500L12 4.600" fill="none" stroke="#6e6e6e" stroke-width="1.300"/><path d="M1.200 5.300L5.600 7.500L4.600 11L2.600 11.400z" fill="#f6f6f6" stroke="#b4b4b4" stroke-width=".7"/><path d="M6 7.800C9 7.400 14 7.600 17.300 9.400C16.500 12 13.500 13.800 10.500 13.600C8 13.200 6.400 10.600 6 7.800z" fill="url(#gl)" stroke="#8e8e8e" stroke-width=".8"/><path d="M1 4.700L6 7.200C10 6.800 14.500 7.400 17.500 9.600" fill="none" stroke="#7a7a7a" stroke-width="1.100"/><path d="M17.500 9.800L22.300 6.800" fill="none" stroke="#9a9a9a" stroke-width="1.200"/><path d="M22.400 5.800v2.200" stroke="#555" stroke-width="1.400"/></svg><svg class="abs" style="left:203px;top:597px" width="27" height="19" viewBox="0 0 27 19"><g transform="translate(0,3)"><path d="M1.500 4.600L6.200 2.400L8.500 1.600" fill="none" stroke="#a9a9a9" stroke-width="1"/><path d="M6.200 2.400L8.600 1.500L12 4.600" fill="none" stroke="#6e6e6e" stroke-width="1.300"/><path d="M1.200 5.300L5.600 7.500L4.600 11L2.600 11.400z" fill="#f6f6f6" stroke="#b4b4b4" stroke-width=".7"/><path d="M6 7.800C9 7.400 14 7.600 17.300 9.400C16.500 12 13.500 13.800 10.500 13.600C8 13.200 6.400 10.600 6 7.800z" fill="url(#gl)" stroke="#8e8e8e" stroke-width=".8"/><path d="M1 4.700L6 7.200C10 6.800 14.500 7.400 17.500 9.600" fill="none" stroke="#7a7a7a" stroke-width="1.100"/><path d="M17.500 9.800L22.300 6.800" fill="none" stroke="#9a9a9a" stroke-width="1.200"/><path d="M22.400 5.800v2.200" stroke="#555" stroke-width="1.400"/></g><path d="M18.500 6.500L22.400 9.500" stroke="#a8b0bc" stroke-width="1"/><ellipse cx="16.400" cy="4.300" rx="3.600" ry="2.800" fill="#7fb8ea" stroke="#86a8c8" stroke-width=".7"/><ellipse cx="15.200" cy="3.800" rx="1.800" ry="1.400" fill="#e8f5ff"/></svg><svg class="abs" style="left:312px;top:596px" width="22" height="23" viewBox="-5 0 22 23"><path d="M1 1.200L12.300 2.200L11.800 19.300L.7 18.200z" fill="#f7f8fa" stroke="#a9adb6" stroke-width=".9"/><path d="M1 1.200L12.300 2.200L12.200 5L1 4z" fill="#3ea2e6"/><path d="M3.600 5v13" stroke="#cfd3da" stroke-width="1.200"/><path d="M7.200 8.600L16.300 9.800L16 21L6.900 19.600z" fill="url(#bl)" stroke="#7fbdf0" stroke-width=".6"/><g fill="#fff"><circle cx="9" cy="11.400" r=".9" fill="#ffb0a0"/><circle cx="8.900" cy="14.400" r=".9"/><circle cx="8.800" cy="17.400" r=".9"/></g><path d="M10.800 11.600l4 .5M10.700 14.600l4 .5M10.600 17.600l4 .5" stroke="#bfe0fa" stroke-width=".9"/><path d="M-2.800 16.800L0 19.800L7 14" fill="none" stroke="#2f9a2a" stroke-width="3"/><path d="M-2.600 16.400L0 19L6.800 13.600" fill="none" stroke="#6fd552" stroke-width="1.300"/></svg><svg class="abs" style="left:407px;top:596px" width="22" height="23" viewBox="-5 0 22 23"><path d="M1 1.200L12.300 2.200L11.800 19.300L.7 18.200z" fill="#f7f8fa" stroke="#a9adb6" stroke-width=".9"/><path d="M1 1.200L12.300 2.200L12.200 5L1 4z" fill="#3ea2e6"/><path d="M3.600 5v13" stroke="#cfd3da" stroke-width="1.200"/><path d="M7.200 8.600L16.300 9.800L16 21L6.900 19.600z" fill="url(#bl)" stroke="#7fbdf0" stroke-width=".6"/><g fill="#fff"><circle cx="9" cy="11.400" r=".9" fill="#ffb0a0"/><circle cx="8.900" cy="14.400" r=".9"/><circle cx="8.800" cy="17.400" r=".9"/></g><path d="M10.800 11.600l4 .5M10.700 14.600l4 .5M10.600 17.600l4 .5" stroke="#bfe0fa" stroke-width=".9"/><circle cx="2.200" cy="17.800" r="4.600" fill="#d8202a" stroke="#a81018" stroke-width=".7"/><ellipse cx="1.800" cy="15.800" rx="3.200" ry="1.800" fill="#f08a8a" opacity=".55"/><path d="M0 15.700l4.400 4.300M4.400 15.700l-4.400 4.300" stroke="#fff" stroke-width="1.600"/></svg><svg class="abs" style="left:511px;top:596px" width="22" height="23" viewBox="-5 0 22 23"><path d="M1 1.200L12.300 2.200L11.800 19.300L.7 18.200z" fill="#f7f8fa" stroke="#a9adb6" stroke-width=".9"/><path d="M1 1.200L12.300 2.200L12.200 5L1 4z" fill="#3ea2e6"/><path d="M3.600 5v13" stroke="#cfd3da" stroke-width="1.200"/><path d="M7.200 8.600L16.300 9.800L16 21L6.900 19.600z" fill="url(#bl)" stroke="#7fbdf0" stroke-width=".6"/><g fill="#fff"><circle cx="9" cy="11.400" r=".9" fill="#ffb0a0"/><circle cx="8.900" cy="14.400" r=".9"/><circle cx="8.800" cy="17.400" r=".9"/></g><path d="M10.800 11.600l4 .5M10.700 14.600l4 .5M10.600 17.600l4 .5" stroke="#bfe0fa" stroke-width=".9"/></svg><svg class="abs" style="left:703px;top:599px" width="19" height="19" viewBox="0 0 19 19"><defs><radialGradient id="gr" cx=".4" cy=".3" r=".8"><stop offset="0" stop-color="#5fd64a"/><stop offset="1" stop-color="#14921c"/></radialGradient></defs><circle cx="9.500" cy="9.500" r="8.800" fill="#b9bcc0" stroke="#a2a5aa" stroke-width=".7"/><circle cx="9.500" cy="9.500" r="7.300" fill="url(#gr)"/><path d="M5 10.500a4.600 4.600 0 0 1 7.200-4.600" fill="none" stroke="#fff" stroke-width="2"/><path d="M11 3.300l3.400 3.600-4.600 1z" fill="#fff"/><path d="M14 8.500a4.600 4.600 0 0 1-7.200 4.600" fill="none" stroke="#fff" stroke-width="2"/><path d="M8 15.700l-3.400-3.600 4.600-1z" fill="#fff"/></svg><svg class="abs" style="left:738px;top:597px;opacity:.28" width="17" height="22" viewBox="0 0 17 22"><path d="M1 1.200L12.300 2.200L11.800 19.300L.7 18.200z" fill="#f7f8fa" stroke="#9aa2ae" stroke-width=".9"/><path d="M1 1.200L12.300 2.200L12.200 5L1 4z" fill="#3ea2e6"/><path d="M1 17h10" stroke="#5fc65a" stroke-width="1.500"/><circle cx="11.500" cy="15.500" r="4.500" fill="#3cb43c" stroke="#999" stroke-width=".8"/><path d="M9.500 15.500a2 2 0 0 1 3.500-1.300M13.500 15.500a2 2 0 0 1-3.500 1.300" stroke="#fff" stroke-width="1.100" fill="none"/></svg><svg class="abs" style="left:765px;top:599px" width="22" height="19" viewBox="0 0 22 19"><path d="M3.800 1.200L20.800 .8L19.600 16.400L.8 15.400z" fill="#fbfbfb" stroke="#5a5e66" stroke-width="1"/><path d="M19.600 16.400L.8 15.400L.6 16.800L19.800 17.800z" fill="#4a4e56"/><path d="M20.800 .8L19.600 16.400l1 .6L21.800 1.400z" fill="#6a6e76"/><path d="M2.400 8.200L20.200 8.400" stroke="#9ca0a8" stroke-width="1"/><path d="M.8 15.400L3.800 1.200L7 1.100L4.400 15.600z" fill="#cfe4f6" opacity=".8"/><path d="M11.200 1.800L15 6H12.800V10.500H15L11.200 14.700L7.400 10.500H9.600V6H7.400z" fill="#2fae38" stroke="#1c8a26" stroke-width=".6"/></svg>
</div></body></html>
